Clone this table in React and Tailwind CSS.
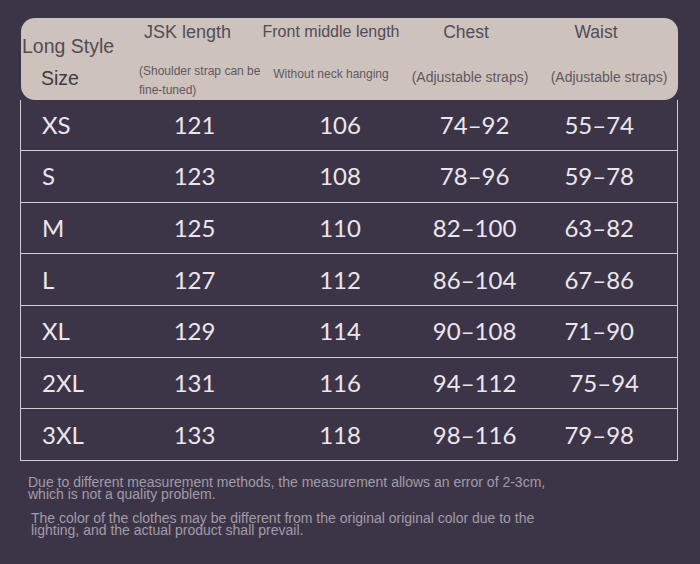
import React from "react";

const rows = [
  ["XS", "121", "106", "74–92", "55–74"],
  ["S", "123", "108", "78–96", "59–78"],
  ["M", "125", "110", "82–100", "63–82"],
  ["L", "127", "112", "86–104", "67–86"],
  ["XL", "129", "114", "90–108", "71–90"],
  ["2XL", "131", "116", "94–112", "75–94"],
  ["3XL", "133", "118", "98–116", "79–98"],
];

export default function App() {
  return (
    <div className="w-[700px] h-[564px] bg-[#3c3547] overflow-hidden pt-[18px]">
      {/* header */}
      <div
        className="ml-[21px] w-[657px] h-[82px] rounded-[14px] bg-[#cdc3bc] flex text-[#524c58]"
        style={{ fontFamily: "'Liberation Sans', Arial, sans-serif" }}
      >
        <div className="w-[114px] flex flex-col pt-[17px]">
          <div className="text-[19.5px] leading-[22px] pl-[1px] whitespace-nowrap">Long Style</div>
          <div className="text-[19.5px] leading-[22px] pl-[20px] mt-[10px] text-[#3f3a45]">Size</div>
        </div>
        <div className="w-[127px] flex flex-col pt-[4px]">
          <div className="text-[18px] leading-[20px] pl-[9px]">JSK length</div>
          <div className="text-[12px] leading-[19px] pl-[4px] mt-[20px] whitespace-nowrap text-[#5f5862]">
            (Shoulder strap can be
            <br />
            fine-tuned)
          </div>
        </div>
        <div className="w-[138px] flex flex-col items-center pt-[4px]">
          <div className="text-[16px] leading-[20px] whitespace-nowrap">Front middle length</div>
          <div className="text-[12px] leading-[19px] mt-[23px] whitespace-nowrap text-[#5f5862]">
            Without neck hanging
          </div>
        </div>
        <div className="w-[140px] flex flex-col items-center pt-[4px]">
          <div className="text-[17.5px] leading-[20px] pr-[8px]">Chest</div>
          <div className="text-[14px] leading-[19px] mt-[26px] whitespace-nowrap text-[#5f5862]">
            (Adjustable straps)
          </div>
        </div>
        <div className="w-[138px] flex flex-col items-center pt-[4px]">
          <div className="text-[17.5px] leading-[20px] pr-[26px]">Waist</div>
          <div className="text-[14px] leading-[19px] mt-[26px] whitespace-nowrap text-[#5f5862]">
            (Adjustable straps)
          </div>
        </div>
      </div>

      {/* table body */}
      <div
        className="ml-[20px] w-[658px] border-x border-b border-[#d3cbd3] text-[#ece6ec] text-[24px]"
        style={{ fontFamily: "Lato, 'Noto Sans', sans-serif" }}
      >
        {rows.map((r, i) => (
          <div
            key={r[0]}
            className={
              i === 0
                ? "flex items-center h-[50px]"
                : "flex items-center h-[51.67px] border-t border-[#d3cbd3]"
            }
          >
            <div className="w-[110px] pl-[21px]">{r[0]}</div>
            <div className="w-[128px] text-center">{r[1]}</div>
            <div className="w-[164px] text-center">{r[2]}</div>
            <div className="w-[106px] text-center">{r[3]}</div>
            <div className={i === 5 ? "w-[150px] text-center pl-[4px]" : "w-[150px] text-center pr-[6px]"}>
              {r[4]}
            </div>
          </div>
        ))}
      </div>

      {/* notes */}
      <div
        className="text-[14px] leading-[12px] text-[#a29ca8] mt-[15px]"
        style={{ fontFamily: "'Liberation Sans', Arial, sans-serif" }}
      >
        <p className="pl-[28px]">
          Due to different measurement methods, the measurement allows an error of 2-3cm,
          <br />
          which is not a quality problem.
        </p>
        <p className="pl-[31px] mt-[12px]">
          The color of the clothes may be different from the original original color due to the
          <br />
          lighting, and the actual product shall prevail.
        </p>
      </div>
    </div>
  );
}
